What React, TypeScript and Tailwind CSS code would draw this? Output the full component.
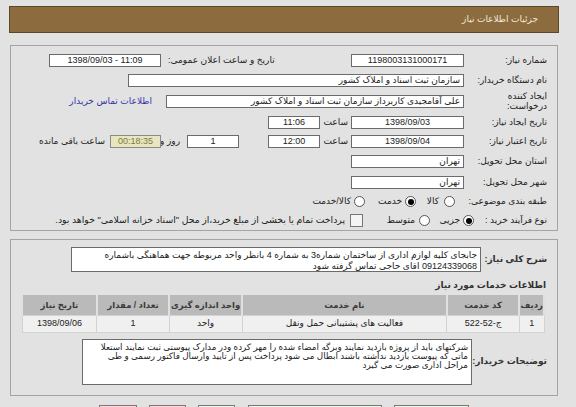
import React from "react";

const Box = ({
  w,
  children,
  align = "center",
  className = "",
}: {
  w: string;
  children?: React.ReactNode;
  align?: "center" | "right";
  className?: string;
}) => (
  <div
    className={`${w} h-[13px] shrink-0 border border-[#6b6b6b] bg-white flex items-center px-[3px] overflow-hidden ${
      align === "center" ? "justify-center" : "justify-start"
    } ${className}`}
  >
    {children}
  </div>
);

const Radio = ({ checked }: { checked?: boolean }) => (
  <span className="w-[11px] h-[11px] shrink-0 rounded-full border border-[#555] bg-white flex items-center justify-center">
    {checked && <span className="w-[6px] h-[6px] rounded-full bg-black" />}
  </span>
);

const Label = ({ children, w = "w-[83px]" }: { children: React.ReactNode; w?: string }) => (
  <div className={`${w} shrink-0 text-right`}>{children}</div>
);

export default function App() {
  return (
    <div
      dir="rtl"
      className="w-[576px] h-[407px] overflow-hidden whitespace-nowrap bg-[#e2e2e2] text-[#222] text-[9px] leading-none font-['Liberation_Sans','DejaVu_Sans',sans-serif]"
    >
      {/* header */}
      <div className="mt-[6px] mr-[17px] ml-[9px] h-[27px] bg-[#8c6c3f] border border-[#5c472a] flex items-center pr-[20px] text-[#f2e9d6]">
        جزئیات اطلاعات نیاز
      </div>

      {/* first panel */}
      <div className="mt-[12px] mr-[18px] ml-[10px] h-[186px] border border-[#a4a4a4] pt-[4px] pr-[10px]">
        <div className="flex items-center h-[20px]">
          <Label>شماره نیاز:</Label>
          <Box w="w-[113px]">1198003131000171</Box>
          <div className="mr-auto ml-[38px] flex items-center gap-[7px]">
            <span>تاریخ و ساعت اعلان عمومی:</span>
            <Box w="w-[112px]">
              <span dir="ltr">1398/09/03 - 11:09</span>
            </Box>
          </div>
        </div>

        <div className="flex items-center h-[20px]">
          <Label>نام دستگاه خریدار:</Label>
          <Box w="w-[336px]" align="right">
            سازمان ثبت اسناد و املاک کشور
          </Box>
        </div>

        <div className="flex items-center h-[22px]">
          <Label>
            <div className="leading-[10px]">
              ایجاد کننده
              <br />
              درخواست:
            </div>
          </Label>
          <Box w="w-[298px]" align="right">
            علی آقامجیدی کاربرداز سازمان ثبت اسناد و املاک کشور
          </Box>
          <span className="mr-[14px] text-[#3434a8]">اطلاعات تماس خریدار</span>
        </div>

        <div className="flex items-center h-[20px]">
          <Label>تاریخ ایجاد نیاز:</Label>
          <Box w="w-[113px]">1398/09/03</Box>
          <span className="mr-[3px] w-[25px]">ساعت</span>
          <Box w="w-[52px]" className="mr-[3px]">
            11:06
          </Box>
        </div>

        <div className="flex items-center h-[19px]">
          <Label>تاریخ اعتبار نیاز:</Label>
          <Box w="w-[113px]">1398/09/04</Box>
          <span className="mr-[3px] w-[25px]">ساعت</span>
          <Box w="w-[52px]" className="mr-[3px]">
            12:00
          </Box>
          <Box w="w-[52px]" className="mr-[29px]">
            1
          </Box>
          <span className="mr-[7px] w-[14px]">روز و</span>
          <div className="mr-[5px] w-[51px] h-[13px] border border-[#8a8a8a] bg-[#e7e6c1] text-[#7d7a3a] flex items-center justify-center">
            00:18:35
          </div>
          <span className="mr-[5px]">ساعت باقی مانده</span>
        </div>

        <div className="flex items-center h-[21px]">
          <Label>استان محل تحویل:</Label>
          <Box w="w-[113px]" align="right">
            تهران
          </Box>
        </div>

        <div className="flex items-center h-[20px]">
          <Label>شهر محل تحویل:</Label>
          <Box w="w-[113px]" align="right">
            تهران
          </Box>
        </div>

        <div className="flex items-center h-[19px]">
          <Label>طبقه بندی موضوعی:</Label>
          <div className="mr-[9px] flex items-center">
            <Radio />
            <span className="mr-[5px] w-[12px]">کالا</span>
            <span className="mr-[11px]">
              <Radio checked />
            </span>
            <span className="mr-[3px] w-[25px]">خدمت</span>
            <span className="mr-[12px]">
              <Radio />
            </span>
            <span className="mr-[3px]">کالا/خدمت</span>
          </div>
        </div>

        <div className="flex items-center h-[19px]">
          <Label w="w-[73px]">نوع فرآیند خرید :</Label>
          <Radio checked />
          <span className="mr-[3px] w-[20px]">جزیی</span>
          <span className="mr-[10px]">
            <Radio />
          </span>
          <span className="mr-[4px] w-[27px]">متوسط</span>
          <span className="mr-[25px] w-[13px] h-[13px] border border-[#777] bg-[#f4f4f4]" />
          <span className="mr-[5px] text-[9.3px]">
            پرداخت تمام یا بخشی از مبلغ خرید،از محل "اسناد خزانه اسلامی" خواهد بود.
          </span>
        </div>
      </div>

      {/* second panel */}
      <div className="mt-[8px] mr-[18px] ml-[10px] h-[157px] border border-[#a4a4a4] pt-[7px] pr-[10px] pl-[11px]">
        <div className="flex items-center">
          <div className="w-[66px] shrink-0 font-bold text-[#333]">شرح کلی نیاز:</div>
          <div className="w-[410px] h-[25px] border border-[#6b6b6b] bg-white px-[3px] pt-[2px] leading-[11px] text-[9px] text-right overflow-hidden">
            جابجای کلیه لوازم اداری از ساختمان شماره3 به شماره 4 بانظر واحد مربوطه جهت هماهنگی باشماره
            <br />
            09124339068 اقای حاجی تماس گرفته شود
          </div>
        </div>

        <div className="mt-[9px] font-bold text-[#333] pr-[1px]">اطلاعات خدمات مورد نیاز</div>

        <table className="mt-[5px] mr-[2px] w-[524px] border-collapse text-center">
          <thead>
            <tr className="h-[20px] bg-[#bababa] text-[#3a3a3a] text-[8.5px]">
              <th className="w-[20px] border-x-2 border-[#e0e0e0] font-bold">ردیف</th>
              <th className="w-[74px] border-x-2 border-[#e0e0e0] font-bold">کد خدمت</th>
              <th className="w-[208px] border-x-2 border-[#e0e0e0] font-bold">نام خدمت</th>
              <th className="w-[73px] border-x-2 border-[#e0e0e0] font-bold">واحد اندازه گیری</th>
              <th className="w-[73px] border-x-2 border-[#e0e0e0] font-bold">تعداد / مقدار</th>
              <th className="w-[76px] border-x-2 border-[#e0e0e0] font-bold">تاریخ نیاز</th>
            </tr>
          </thead>
          <tbody>
            <tr className="h-[17px] bg-[#f0f0f0]">
              <td className="border border-[#d2d2d2]">1</td>
              <td className="border border-[#d2d2d2]">ج-52-522</td>
              <td className="border border-[#d2d2d2]">فعالیت های پشتیبانی حمل ونقل</td>
              <td className="border border-[#d2d2d2]">واحد</td>
              <td className="border border-[#d2d2d2]">1</td>
              <td className="border border-[#d2d2d2]">1398/09/06</td>
            </tr>
          </tbody>
        </table>

        <div className="mt-[6px] flex items-center">
          <div className="w-[75px] shrink-0 font-bold text-[#333]">توضیحات خریدار:</div>
          <div className="w-[390px] h-[46px] border border-[#6b6b6b] bg-white px-[3px] pt-[3px] leading-[9px] text-[8.75px] text-right overflow-hidden">
            شرکتهای باید از پروژه بازدید نمایند وبرگه امضاء شده را مهر کرده ودر مدارک پیوستی ثبت نمایند استعلا
            <br />
            ماتی که پیوست بازدید نداشته باشند ابطال می شود پرداخت پس از تایید وارسال فاکتور رسمی و  طی
            <br />
            مراحل اداری صورت می گیرد
          </div>
        </div>
      </div>

      {/* bottom buttons (cut off) */}
      <div dir="ltr" className="mt-[9px] flex">
        <div className="ml-[99px] w-[38px] h-[20px] border border-[#777] bg-[#f8d8d8]" />
        <div className="ml-[12px] w-[37px] h-[20px] border border-[#777] bg-[#f8d8d8]" />
        <div className="ml-[12px] w-[37px] h-[20px] border border-[#777] bg-[#eaf6ea]" />
        <div className="ml-[13px] w-[134px] h-[20px] border border-[#777] bg-[#eaf6ea]" />
        <div className="ml-[12px] w-[75px] h-[20px] border border-[#777] bg-[#eaf6ea]" />
      </div>
    </div>
  );
}
